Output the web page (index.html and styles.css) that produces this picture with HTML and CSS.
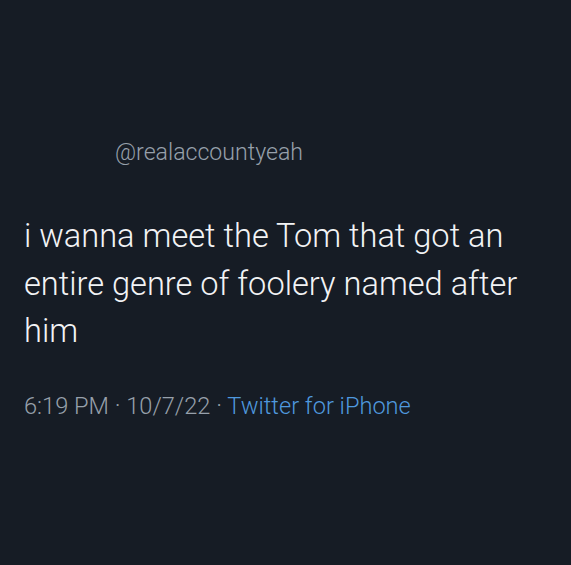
FILE: index.html
```html
<html lang="en">
<head>
    <meta charset="UTF-8">
    <title>Tweet</title>
    <link rel="stylesheet" href="styles.css">
</head>
<body>
    <div class="tweet">
        <div class="handle">@realaccountyeah</div>
        <p class="text">i wanna meet the Tom that got an entire genre of foolery named after him</p>
        <div class="meta">6:19 PM · 10/7/22 · <span class="source">Twitter for iPhone</span></div>
    </div>
</body>
</html>
```

FILE: styles.css
```css
body {
    margin: 0;
    background-color: #161c25;
    font-family: Roboto, "Liberation Sans", sans-serif;
    min-height: 100vh;
}

.tweet {
    padding: 138px 24px 0 24px;
}

.handle {
    color: #97a0ab;
    font-size: 23.1px;
    font-weight: 300;
    padding-left: 91px;
    line-height: 30px;
}

.text {
    margin: 45px 0 0 0;
    color: #f2f3f5;
    font-size: 32.6px;
    font-weight: 300;
    line-height: 47.5px;
}

.meta {
    margin-top: 35px;
    color: #97a0ab;
    font-size: 23.6px;
    font-weight: 300;
    line-height: 30px;
}

.source {
    color: #4f98de;
}
```
